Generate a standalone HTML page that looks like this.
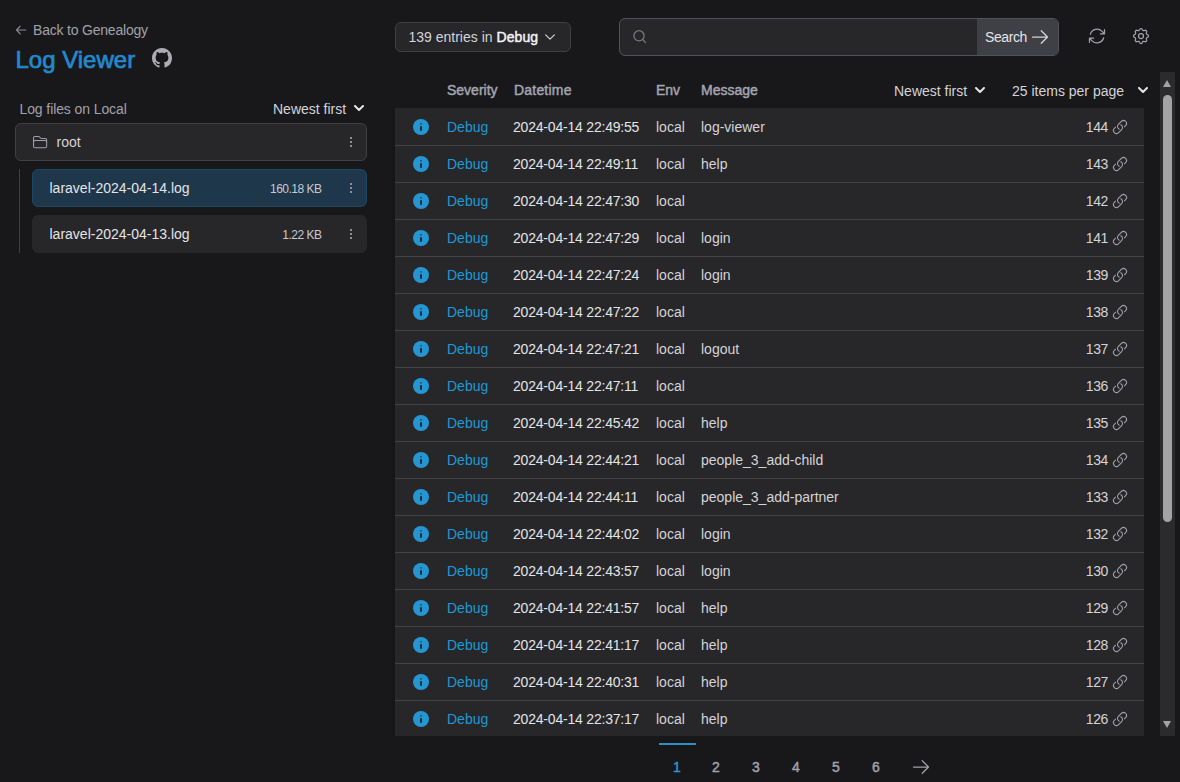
<!DOCTYPE html>
<html><head><meta charset="utf-8">
<style>
*{box-sizing:border-box;margin:0;padding:0}
html,body{width:1180px;height:782px;overflow:hidden;background:#18181b;font-family:"Liberation Sans",sans-serif;color:#d4d4d8;font-size:14px;line-height:16px}
.abs{position:absolute}
svg{display:block}
#back{left:33px;top:22px;color:#a1a1aa;font-size:14px;letter-spacing:-0.2px;white-space:nowrap}
#backarr{left:15px;top:25px}
#title{left:15.5px;top:46px;color:#2289cd;font-size:24px;line-height:28px;font-weight:normal;-webkit-text-stroke:0.7px #2289cd;white-space:nowrap}
#gh{left:152px;top:48px}
#lf{left:19.5px;top:101px;color:#a1a1aa;white-space:nowrap;letter-spacing:-0.1px}
#nf{left:273px;top:101px;color:#d4d4d8;white-space:nowrap}
#nfchev{left:353px;top:102px}
#root{left:15px;top:123px;width:352px;height:38px;border:1px solid #3f3f46;background:#27272a;border-radius:6px}
#root .t{position:absolute;left:40.5px;top:10px;color:#d4d4d8}
#folder{position:absolute;left:15.7px;top:10px}
#vline{left:19px;top:169px;width:1px;height:84px;background:#3f3f46}
.file{position:absolute;left:32px;width:335px;height:38px;border-radius:6px;background:#27272a;border:1px solid #27272a}
.file.sel{background:#1e374b;border-color:#1f4762}
.file .n{position:absolute;left:16.5px;top:10px;color:#e4e4e7;white-space:nowrap}
.file .s{position:absolute;right:44.5px;top:12px;font-size:12px;line-height:14px;letter-spacing:-0.5px;color:#c8c8d0;white-space:nowrap}
.dots{position:absolute}
.dots i{display:block;width:2px;height:2px;background:#8e8e96;margin-bottom:2px}
#entries{left:395px;top:22px;width:176px;height:30px;border:1px solid #3f3f46;background:#27272a;border-radius:6px}
#entries .t{position:absolute;left:12.5px;top:6px;color:#d4d4d8;white-space:nowrap}
#entries b{color:#f4f4f5;font-weight:normal;-webkit-text-stroke:0.45px #f4f4f5;letter-spacing:0.1px}
#echev{position:absolute;left:147px;top:7px}
#search{left:619px;top:18px;width:440px;height:38px;border:1px solid #52525b;background:#27272a;border-radius:6px;overflow:hidden}
#sicon{position:absolute;left:11px;top:9px}
#sbtn{position:absolute;right:0;top:0;width:81px;height:36px;background:#3f3f46;color:#e4e4e7}
#sbtn .t{position:absolute;left:8px;top:10px;white-space:nowrap;letter-spacing:-0.4px}
#sarr{position:absolute;left:53px;top:8px}
#refresh{left:1087px;top:26px}
#cog{left:1131px;top:26px}
#table{left:395px;top:108px;width:749px;height:628px;background:#27272a;overflow:hidden}
.row{position:absolute;left:0;width:749px;height:37px;border-bottom:1px solid #424244}
.row.last{border-bottom:none}
.row span{position:absolute;top:10px;white-space:nowrap}
.ic{position:absolute;left:16px;top:8px}
.lk{position:absolute;left:717px;top:10px}
.dbg{left:52px;color:#1c9ad6}
.dt{left:118px;color:#e4e4e7;letter-spacing:-0.2px}
.env{left:261px;color:#d4d4d8}
.msg{left:306px;color:#d4d4d8}
.num{right:36px;color:#d4d4d8;letter-spacing:-0.4px}
.th{position:absolute;top:82px;color:#a4a5b0;font-weight:normal;-webkit-text-stroke:0.45px #a4a5b0;white-space:nowrap}
.tr{position:absolute;top:83px;color:#d4d4d8;white-space:nowrap}
#track{left:1160px;top:72px;width:15px;height:664px;background:#2b2b2e}
#thumb{left:1163px;top:95px;width:9px;height:427px;background:#a3a3a3;border-radius:5px}
#uparr{left:1162.7px;top:80px;width:0;height:0;border-left:4.6px solid transparent;border-right:4.6px solid transparent;border-bottom:7px solid #a3a3a3}
#dnarr{left:1162.7px;top:721px;width:0;height:0;border-left:4.6px solid transparent;border-right:4.6px solid transparent;border-top:7px solid #a3a3a3}
.pg{position:absolute;top:759px;color:#a1a1aa;font-weight:normal;-webkit-text-stroke:0.45px currentColor;white-space:nowrap}
#pgline{left:659px;top:743px;width:37px;height:2px;background:#2b8fc6}
#pgarr{left:911px;top:757px}
</style></head><body>
<svg id="backarr" class="abs" width="12" height="10" viewBox="0 0 12 10" fill="none" stroke="#8a8a92" stroke-width="1.2" stroke-linecap="round" stroke-linejoin="round"><path d="M1.5 5H10.8M5.2 1.2L1.5 5L5.2 8.8"/></svg>
<div id="back" class="abs">Back to Genealogy</div>
<div id="title" class="abs">Log Viewer</div>
<svg id="gh" class="abs" width="20" height="20" viewBox="0 0 16 16"><path fill="#acacb4" d="M8 0C3.58 0 0 3.58 0 8c0 3.54 2.29 6.53 5.47 7.59.4.07.55-.17.55-.38 0-.19-.01-.82-.01-1.49-2.01.37-2.53-.49-2.69-.94-.09-.23-.48-.94-.82-1.13-.28-.15-.68-.52-.01-.53.63-.01 1.08.58 1.23.82.72 1.21 1.87.87 2.33.66.07-.52.28-.87.51-1.07-1.78-.2-3.64-.89-3.64-3.95 0-.87.31-1.59.82-2.15-.08-.2-.36-1.02.08-2.12 0 0 .67-.21 2.2.82.64-.18 1.32-.27 2-.27.68 0 1.36.09 2 .27 1.53-1.04 2.2-.82 2.2-.82.44 1.1.16 1.92.08 2.12.51.56.82 1.27.82 2.15 0 3.07-1.87 3.75-3.65 3.95.29.25.54.73.54 1.48 0 1.07-.01 1.93-.01 2.2 0 .21.15.46.55.38A8.013 8.013 0 0016 8c0-4.42-3.58-8-8-8z"/></svg>
<div id="lf" class="abs">Log files on Local</div>
<div id="nf" class="abs">Newest first</div>
<svg class="abs" style="left:354px;top:105px" width="10" height="7" viewBox="0 0 10 7" fill="none" stroke="#e4e4e7" stroke-width="2" stroke-linecap="round" stroke-linejoin="round"><path d="M1 1L5 5L9 1"/></svg>
<div id="root" class="abs">
<svg id="folder" width="16.2" height="16.2" viewBox="0 0 24 24" fill="none" stroke="#a1a1aa" stroke-width="1.5" stroke-linecap="round" stroke-linejoin="round"><path d="M2.25 12.75V12A2.25 2.25 0 014.5 9.75h15A2.25 2.25 0 0121.75 12v.75m-8.69-6.44l-2.12-2.12a1.5 1.5 0 00-1.061-.44H4.5A2.25 2.25 0 002.25 6v12a2.25 2.25 0 002.25 2.25h15A2.25 2.25 0 0021.75 18V9a2.25 2.25 0 00-2.25-2.25h-5.379a1.5 1.5 0 01-1.06-.44z"/></svg>
<span class="t">root</span>
<div class="dots" style="left:334px;top:13px"><i></i><i></i><i></i></div>
</div>
<div id="vline" class="abs"></div>
<div class="file sel" style="top:169px"><span class="n">laravel-2024-04-14.log</span><span class="s">160.18 KB</span><div class="dots" style="left:317px;top:13px"><i></i><i></i><i></i></div></div>
<div class="file" style="top:215px"><span class="n">laravel-2024-04-13.log</span><span class="s">1.22 KB</span><div class="dots" style="left:317px;top:13px"><i></i><i></i><i></i></div></div>
<div id="entries" class="abs"><span class="t">139 entries in <b>Debug</b></span>
<svg id="echev" width="14" height="14" viewBox="0 0 24 24" fill="none" stroke="#d4d4d8" stroke-width="2" stroke-linecap="round" stroke-linejoin="round"><path d="M19.5 8.25l-7.5 7.5-7.5-7.5"/></svg></div>
<div id="search" class="abs">
<svg id="sicon" width="16" height="16" viewBox="0 0 16 16" fill="none" stroke="#77777f" stroke-width="1.3" stroke-linecap="round"><circle cx="8" cy="7.8" r="5.1"/><path d="M11.7 11.5L14.6 14.6"/></svg>
<div id="sbtn"><span class="t">Search</span><svg id="sarr" width="20" height="20" viewBox="0 0 24 24" fill="none" stroke="#d4d4d8" stroke-width="1.5" stroke-linecap="round" stroke-linejoin="round"><path d="M13.5 4.5L21 12m0 0l-7.5 7.5M21 12H3"/></svg></div>
</div>
<svg id="refresh" class="abs" width="20" height="20" viewBox="0 0 24 24" fill="none" stroke="#a1a1aa" stroke-width="1.5" stroke-linecap="round" stroke-linejoin="round"><path d="M16.023 9.348h4.992v-.001M2.985 19.644v-4.992m0 0h4.992m-4.993 0l3.181 3.183a8.25 8.25 0 0013.803-3.7M4.031 9.865a8.25 8.25 0 0113.803-3.7l3.181 3.182m0-4.991v4.99"/></svg>
<svg id="cog" class="abs" width="20" height="20" viewBox="0 0 24 24" fill="none" stroke="#a1a1aa" stroke-width="1.5" stroke-linecap="round" stroke-linejoin="round"><path d="M10.325 4.317c.426-1.756 2.924-1.756 3.35 0a1.724 1.724 0 002.573 1.066c1.543-.94 3.31.826 2.37 2.37a1.724 1.724 0 001.065 2.572c1.756.426 1.756 2.924 0 3.35a1.724 1.724 0 00-1.066 2.573c.94 1.543-.826 3.31-2.37 2.37a1.724 1.724 0 00-2.572 1.065c-.426 1.756-2.924 1.756-3.35 0a1.724 1.724 0 00-2.573-1.066c-1.543.94-3.31-.826-2.37-2.370a1.724 1.724 0 00-1.065-2.572c-1.756-.426-1.756-2.924 0-3.35a1.724 1.724 0 001.066-2.573c-.94-1.543.826-3.31 2.37-2.37.996.608 2.296.07 2.572-1.065z"/><path d="M15 12a3 3 0 11-6 0 3 3 0 016 0z"/></svg>
<div class="th" style="left:447px">Severity</div>
<div class="th" style="left:514px;letter-spacing:0.2px">Datetime</div>
<div class="th" style="left:656px">Env</div>
<div class="th" style="left:701px">Message</div>
<div class="tr" style="left:894px">Newest first</div>
<svg class="abs" style="left:975px;top:87px" width="10" height="7" viewBox="0 0 10 7" fill="none" stroke="#e4e4e7" stroke-width="2" stroke-linecap="round" stroke-linejoin="round"><path d="M1 1L5 5L9 1"/></svg>
<div class="tr" style="left:1012px">25 items per page</div>
<svg class="abs" style="left:1137.7px;top:87px" width="10" height="7" viewBox="0 0 10 7" fill="none" stroke="#e4e4e7" stroke-width="2" stroke-linecap="round" stroke-linejoin="round"><path d="M1 1L5 5L9 1"/></svg>
<div class="abs" style="left:392px;top:108px;width:3px;height:628px;background:#161618"></div>
<div id="table" class="abs">
<div class="row" style="top:1px"><svg class="ic" viewBox="0 0 20 20" width="20" height="20"><circle cx="10" cy="10" r="8" fill="#2596d2"/><circle cx="10" cy="6.8" r="0.85" fill="#1d3f55"/><rect x="9.1" y="9" width="1.8" height="5" rx="0.9" fill="#15222c"/></svg><span class="dbg">Debug</span><span class="dt">2024-04-14 22:49:55</span><span class="env">local</span><span class="msg">log-viewer</span><span class="num">144</span><svg class="lk" viewBox="0 0 24 24" width="16" height="16" fill="none" stroke="#a1a1aa" stroke-width="1.6" stroke-linecap="round" stroke-linejoin="round"><path d="M13.19 8.688a4.5 4.5 0 0 1 1.242 7.244l-4.5 4.5a4.5 4.5 0 0 1-6.364-6.364l1.757-1.757m13.35-.622 1.757-1.757a4.5 4.5 0 0 0-6.364-6.364l-4.5 4.5a4.5 4.5 0 0 0 1.242 7.244"/></svg></div>
<div class="row" style="top:38px"><svg class="ic" viewBox="0 0 20 20" width="20" height="20"><circle cx="10" cy="10" r="8" fill="#2596d2"/><circle cx="10" cy="6.8" r="0.85" fill="#1d3f55"/><rect x="9.1" y="9" width="1.8" height="5" rx="0.9" fill="#15222c"/></svg><span class="dbg">Debug</span><span class="dt">2024-04-14 22:49:11</span><span class="env">local</span><span class="msg">help</span><span class="num">143</span><svg class="lk" viewBox="0 0 24 24" width="16" height="16" fill="none" stroke="#a1a1aa" stroke-width="1.6" stroke-linecap="round" stroke-linejoin="round"><path d="M13.19 8.688a4.5 4.5 0 0 1 1.242 7.244l-4.5 4.5a4.5 4.5 0 0 1-6.364-6.364l1.757-1.757m13.35-.622 1.757-1.757a4.5 4.5 0 0 0-6.364-6.364l-4.5 4.5a4.5 4.5 0 0 0 1.242 7.244"/></svg></div>
<div class="row" style="top:75px"><svg class="ic" viewBox="0 0 20 20" width="20" height="20"><circle cx="10" cy="10" r="8" fill="#2596d2"/><circle cx="10" cy="6.8" r="0.85" fill="#1d3f55"/><rect x="9.1" y="9" width="1.8" height="5" rx="0.9" fill="#15222c"/></svg><span class="dbg">Debug</span><span class="dt">2024-04-14 22:47:30</span><span class="env">local</span><span class="msg"></span><span class="num">142</span><svg class="lk" viewBox="0 0 24 24" width="16" height="16" fill="none" stroke="#a1a1aa" stroke-width="1.6" stroke-linecap="round" stroke-linejoin="round"><path d="M13.19 8.688a4.5 4.5 0 0 1 1.242 7.244l-4.5 4.5a4.5 4.5 0 0 1-6.364-6.364l1.757-1.757m13.35-.622 1.757-1.757a4.5 4.5 0 0 0-6.364-6.364l-4.5 4.5a4.5 4.5 0 0 0 1.242 7.244"/></svg></div>
<div class="row" style="top:112px"><svg class="ic" viewBox="0 0 20 20" width="20" height="20"><circle cx="10" cy="10" r="8" fill="#2596d2"/><circle cx="10" cy="6.8" r="0.85" fill="#1d3f55"/><rect x="9.1" y="9" width="1.8" height="5" rx="0.9" fill="#15222c"/></svg><span class="dbg">Debug</span><span class="dt">2024-04-14 22:47:29</span><span class="env">local</span><span class="msg">login</span><span class="num">141</span><svg class="lk" viewBox="0 0 24 24" width="16" height="16" fill="none" stroke="#a1a1aa" stroke-width="1.6" stroke-linecap="round" stroke-linejoin="round"><path d="M13.19 8.688a4.5 4.5 0 0 1 1.242 7.244l-4.5 4.5a4.5 4.5 0 0 1-6.364-6.364l1.757-1.757m13.35-.622 1.757-1.757a4.5 4.5 0 0 0-6.364-6.364l-4.5 4.5a4.5 4.5 0 0 0 1.242 7.244"/></svg></div>
<div class="row" style="top:149px"><svg class="ic" viewBox="0 0 20 20" width="20" height="20"><circle cx="10" cy="10" r="8" fill="#2596d2"/><circle cx="10" cy="6.8" r="0.85" fill="#1d3f55"/><rect x="9.1" y="9" width="1.8" height="5" rx="0.9" fill="#15222c"/></svg><span class="dbg">Debug</span><span class="dt">2024-04-14 22:47:24</span><span class="env">local</span><span class="msg">login</span><span class="num">139</span><svg class="lk" viewBox="0 0 24 24" width="16" height="16" fill="none" stroke="#a1a1aa" stroke-width="1.6" stroke-linecap="round" stroke-linejoin="round"><path d="M13.19 8.688a4.5 4.5 0 0 1 1.242 7.244l-4.5 4.5a4.5 4.5 0 0 1-6.364-6.364l1.757-1.757m13.35-.622 1.757-1.757a4.5 4.5 0 0 0-6.364-6.364l-4.5 4.5a4.5 4.5 0 0 0 1.242 7.244"/></svg></div>
<div class="row" style="top:186px"><svg class="ic" viewBox="0 0 20 20" width="20" height="20"><circle cx="10" cy="10" r="8" fill="#2596d2"/><circle cx="10" cy="6.8" r="0.85" fill="#1d3f55"/><rect x="9.1" y="9" width="1.8" height="5" rx="0.9" fill="#15222c"/></svg><span class="dbg">Debug</span><span class="dt">2024-04-14 22:47:22</span><span class="env">local</span><span class="msg"></span><span class="num">138</span><svg class="lk" viewBox="0 0 24 24" width="16" height="16" fill="none" stroke="#a1a1aa" stroke-width="1.6" stroke-linecap="round" stroke-linejoin="round"><path d="M13.19 8.688a4.5 4.5 0 0 1 1.242 7.244l-4.5 4.5a4.5 4.5 0 0 1-6.364-6.364l1.757-1.757m13.35-.622 1.757-1.757a4.5 4.5 0 0 0-6.364-6.364l-4.5 4.5a4.5 4.5 0 0 0 1.242 7.244"/></svg></div>
<div class="row" style="top:223px"><svg class="ic" viewBox="0 0 20 20" width="20" height="20"><circle cx="10" cy="10" r="8" fill="#2596d2"/><circle cx="10" cy="6.8" r="0.85" fill="#1d3f55"/><rect x="9.1" y="9" width="1.8" height="5" rx="0.9" fill="#15222c"/></svg><span class="dbg">Debug</span><span class="dt">2024-04-14 22:47:21</span><span class="env">local</span><span class="msg">logout</span><span class="num">137</span><svg class="lk" viewBox="0 0 24 24" width="16" height="16" fill="none" stroke="#a1a1aa" stroke-width="1.6" stroke-linecap="round" stroke-linejoin="round"><path d="M13.19 8.688a4.5 4.5 0 0 1 1.242 7.244l-4.5 4.5a4.5 4.5 0 0 1-6.364-6.364l1.757-1.757m13.35-.622 1.757-1.757a4.5 4.5 0 0 0-6.364-6.364l-4.5 4.5a4.5 4.5 0 0 0 1.242 7.244"/></svg></div>
<div class="row" style="top:260px"><svg class="ic" viewBox="0 0 20 20" width="20" height="20"><circle cx="10" cy="10" r="8" fill="#2596d2"/><circle cx="10" cy="6.8" r="0.85" fill="#1d3f55"/><rect x="9.1" y="9" width="1.8" height="5" rx="0.9" fill="#15222c"/></svg><span class="dbg">Debug</span><span class="dt">2024-04-14 22:47:11</span><span class="env">local</span><span class="msg"></span><span class="num">136</span><svg class="lk" viewBox="0 0 24 24" width="16" height="16" fill="none" stroke="#a1a1aa" stroke-width="1.6" stroke-linecap="round" stroke-linejoin="round"><path d="M13.19 8.688a4.5 4.5 0 0 1 1.242 7.244l-4.5 4.5a4.5 4.5 0 0 1-6.364-6.364l1.757-1.757m13.35-.622 1.757-1.757a4.5 4.5 0 0 0-6.364-6.364l-4.5 4.5a4.5 4.5 0 0 0 1.242 7.244"/></svg></div>
<div class="row" style="top:297px"><svg class="ic" viewBox="0 0 20 20" width="20" height="20"><circle cx="10" cy="10" r="8" fill="#2596d2"/><circle cx="10" cy="6.8" r="0.85" fill="#1d3f55"/><rect x="9.1" y="9" width="1.8" height="5" rx="0.9" fill="#15222c"/></svg><span class="dbg">Debug</span><span class="dt">2024-04-14 22:45:42</span><span class="env">local</span><span class="msg">help</span><span class="num">135</span><svg class="lk" viewBox="0 0 24 24" width="16" height="16" fill="none" stroke="#a1a1aa" stroke-width="1.6" stroke-linecap="round" stroke-linejoin="round"><path d="M13.19 8.688a4.5 4.5 0 0 1 1.242 7.244l-4.5 4.5a4.5 4.5 0 0 1-6.364-6.364l1.757-1.757m13.35-.622 1.757-1.757a4.5 4.5 0 0 0-6.364-6.364l-4.5 4.5a4.5 4.5 0 0 0 1.242 7.244"/></svg></div>
<div class="row" style="top:334px"><svg class="ic" viewBox="0 0 20 20" width="20" height="20"><circle cx="10" cy="10" r="8" fill="#2596d2"/><circle cx="10" cy="6.8" r="0.85" fill="#1d3f55"/><rect x="9.1" y="9" width="1.8" height="5" rx="0.9" fill="#15222c"/></svg><span class="dbg">Debug</span><span class="dt">2024-04-14 22:44:21</span><span class="env">local</span><span class="msg">people_3_add-child</span><span class="num">134</span><svg class="lk" viewBox="0 0 24 24" width="16" height="16" fill="none" stroke="#a1a1aa" stroke-width="1.6" stroke-linecap="round" stroke-linejoin="round"><path d="M13.19 8.688a4.5 4.5 0 0 1 1.242 7.244l-4.5 4.5a4.5 4.5 0 0 1-6.364-6.364l1.757-1.757m13.35-.622 1.757-1.757a4.5 4.5 0 0 0-6.364-6.364l-4.5 4.5a4.5 4.5 0 0 0 1.242 7.244"/></svg></div>
<div class="row" style="top:371px"><svg class="ic" viewBox="0 0 20 20" width="20" height="20"><circle cx="10" cy="10" r="8" fill="#2596d2"/><circle cx="10" cy="6.8" r="0.85" fill="#1d3f55"/><rect x="9.1" y="9" width="1.8" height="5" rx="0.9" fill="#15222c"/></svg><span class="dbg">Debug</span><span class="dt">2024-04-14 22:44:11</span><span class="env">local</span><span class="msg">people_3_add-partner</span><span class="num">133</span><svg class="lk" viewBox="0 0 24 24" width="16" height="16" fill="none" stroke="#a1a1aa" stroke-width="1.6" stroke-linecap="round" stroke-linejoin="round"><path d="M13.19 8.688a4.5 4.5 0 0 1 1.242 7.244l-4.5 4.5a4.5 4.5 0 0 1-6.364-6.364l1.757-1.757m13.35-.622 1.757-1.757a4.5 4.5 0 0 0-6.364-6.364l-4.5 4.5a4.5 4.5 0 0 0 1.242 7.244"/></svg></div>
<div class="row" style="top:408px"><svg class="ic" viewBox="0 0 20 20" width="20" height="20"><circle cx="10" cy="10" r="8" fill="#2596d2"/><circle cx="10" cy="6.8" r="0.85" fill="#1d3f55"/><rect x="9.1" y="9" width="1.8" height="5" rx="0.9" fill="#15222c"/></svg><span class="dbg">Debug</span><span class="dt">2024-04-14 22:44:02</span><span class="env">local</span><span class="msg">login</span><span class="num">132</span><svg class="lk" viewBox="0 0 24 24" width="16" height="16" fill="none" stroke="#a1a1aa" stroke-width="1.6" stroke-linecap="round" stroke-linejoin="round"><path d="M13.19 8.688a4.5 4.5 0 0 1 1.242 7.244l-4.5 4.5a4.5 4.5 0 0 1-6.364-6.364l1.757-1.757m13.35-.622 1.757-1.757a4.5 4.5 0 0 0-6.364-6.364l-4.5 4.5a4.5 4.5 0 0 0 1.242 7.244"/></svg></div>
<div class="row" style="top:445px"><svg class="ic" viewBox="0 0 20 20" width="20" height="20"><circle cx="10" cy="10" r="8" fill="#2596d2"/><circle cx="10" cy="6.8" r="0.85" fill="#1d3f55"/><rect x="9.1" y="9" width="1.8" height="5" rx="0.9" fill="#15222c"/></svg><span class="dbg">Debug</span><span class="dt">2024-04-14 22:43:57</span><span class="env">local</span><span class="msg">login</span><span class="num">130</span><svg class="lk" viewBox="0 0 24 24" width="16" height="16" fill="none" stroke="#a1a1aa" stroke-width="1.6" stroke-linecap="round" stroke-linejoin="round"><path d="M13.19 8.688a4.5 4.5 0 0 1 1.242 7.244l-4.5 4.5a4.5 4.5 0 0 1-6.364-6.364l1.757-1.757m13.35-.622 1.757-1.757a4.5 4.5 0 0 0-6.364-6.364l-4.5 4.5a4.5 4.5 0 0 0 1.242 7.244"/></svg></div>
<div class="row" style="top:482px"><svg class="ic" viewBox="0 0 20 20" width="20" height="20"><circle cx="10" cy="10" r="8" fill="#2596d2"/><circle cx="10" cy="6.8" r="0.85" fill="#1d3f55"/><rect x="9.1" y="9" width="1.8" height="5" rx="0.9" fill="#15222c"/></svg><span class="dbg">Debug</span><span class="dt">2024-04-14 22:41:57</span><span class="env">local</span><span class="msg">help</span><span class="num">129</span><svg class="lk" viewBox="0 0 24 24" width="16" height="16" fill="none" stroke="#a1a1aa" stroke-width="1.6" stroke-linecap="round" stroke-linejoin="round"><path d="M13.19 8.688a4.5 4.5 0 0 1 1.242 7.244l-4.5 4.5a4.5 4.5 0 0 1-6.364-6.364l1.757-1.757m13.35-.622 1.757-1.757a4.5 4.5 0 0 0-6.364-6.364l-4.5 4.5a4.5 4.5 0 0 0 1.242 7.244"/></svg></div>
<div class="row" style="top:519px"><svg class="ic" viewBox="0 0 20 20" width="20" height="20"><circle cx="10" cy="10" r="8" fill="#2596d2"/><circle cx="10" cy="6.8" r="0.85" fill="#1d3f55"/><rect x="9.1" y="9" width="1.8" height="5" rx="0.9" fill="#15222c"/></svg><span class="dbg">Debug</span><span class="dt">2024-04-14 22:41:17</span><span class="env">local</span><span class="msg">help</span><span class="num">128</span><svg class="lk" viewBox="0 0 24 24" width="16" height="16" fill="none" stroke="#a1a1aa" stroke-width="1.6" stroke-linecap="round" stroke-linejoin="round"><path d="M13.19 8.688a4.5 4.5 0 0 1 1.242 7.244l-4.5 4.5a4.5 4.5 0 0 1-6.364-6.364l1.757-1.757m13.35-.622 1.757-1.757a4.5 4.5 0 0 0-6.364-6.364l-4.5 4.5a4.5 4.5 0 0 0 1.242 7.244"/></svg></div>
<div class="row" style="top:556px"><svg class="ic" viewBox="0 0 20 20" width="20" height="20"><circle cx="10" cy="10" r="8" fill="#2596d2"/><circle cx="10" cy="6.8" r="0.85" fill="#1d3f55"/><rect x="9.1" y="9" width="1.8" height="5" rx="0.9" fill="#15222c"/></svg><span class="dbg">Debug</span><span class="dt">2024-04-14 22:40:31</span><span class="env">local</span><span class="msg">help</span><span class="num">127</span><svg class="lk" viewBox="0 0 24 24" width="16" height="16" fill="none" stroke="#a1a1aa" stroke-width="1.6" stroke-linecap="round" stroke-linejoin="round"><path d="M13.19 8.688a4.5 4.5 0 0 1 1.242 7.244l-4.5 4.5a4.5 4.5 0 0 1-6.364-6.364l1.757-1.757m13.35-.622 1.757-1.757a4.5 4.5 0 0 0-6.364-6.364l-4.5 4.5a4.5 4.5 0 0 0 1.242 7.244"/></svg></div>
<div class="row last" style="top:593px"><svg class="ic" viewBox="0 0 20 20" width="20" height="20"><circle cx="10" cy="10" r="8" fill="#2596d2"/><circle cx="10" cy="6.8" r="0.85" fill="#1d3f55"/><rect x="9.1" y="9" width="1.8" height="5" rx="0.9" fill="#15222c"/></svg><span class="dbg">Debug</span><span class="dt">2024-04-14 22:37:17</span><span class="env">local</span><span class="msg">help</span><span class="num">126</span><svg class="lk" viewBox="0 0 24 24" width="16" height="16" fill="none" stroke="#a1a1aa" stroke-width="1.6" stroke-linecap="round" stroke-linejoin="round"><path d="M13.19 8.688a4.5 4.5 0 0 1 1.242 7.244l-4.5 4.5a4.5 4.5 0 0 1-6.364-6.364l1.757-1.757m13.35-.622 1.757-1.757a4.5 4.5 0 0 0-6.364-6.364l-4.5 4.5a4.5 4.5 0 0 0 1.242 7.244"/></svg></div>

</div>
<div id="track" class="abs"></div>
<div id="thumb" class="abs"></div>
<div id="uparr" class="abs"></div>
<div id="dnarr" class="abs"></div>
<div id="pgline" class="abs"></div>
<div class="pg" style="left:673px;color:#2d95d5">1</div>
<div class="pg" style="left:712px">2</div>
<div class="pg" style="left:752px">3</div>
<div class="pg" style="left:792px">4</div>
<div class="pg" style="left:832px">5</div>
<div class="pg" style="left:872px">6</div>
<svg id="pgarr" class="abs" width="20" height="20" viewBox="0 0 24 24" fill="none" stroke="#a1a1aa" stroke-width="1.5" stroke-linecap="round" stroke-linejoin="round"><path d="M13.5 4.5L21 12m0 0l-7.5 7.5M21 12H3"/></svg>
</body></html>
